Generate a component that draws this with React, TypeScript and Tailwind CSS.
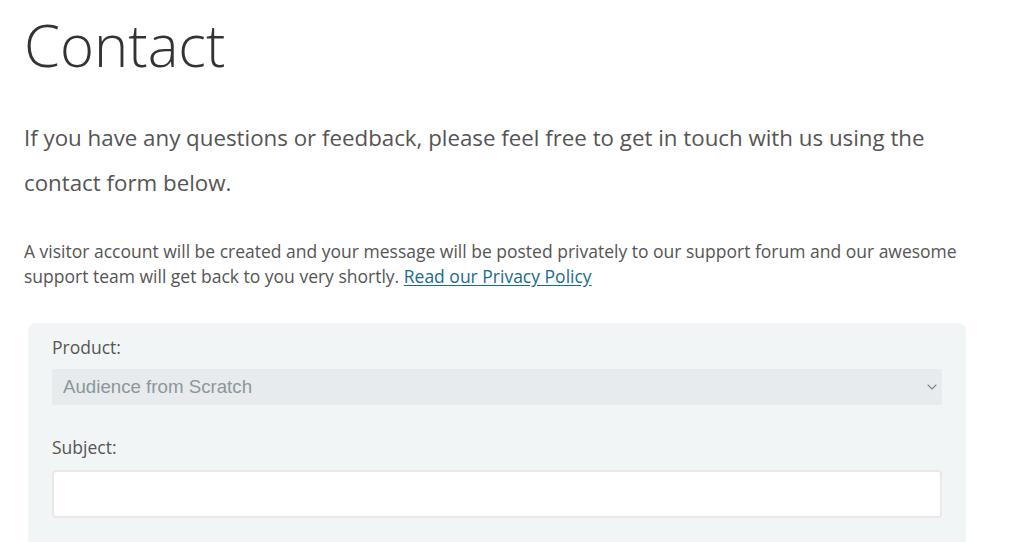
import React from 'react';
import { ChevronDown } from 'lucide-react';

export default function App() {
  return (
    <div className="min-h-screen bg-white font-['Open_Sans',sans-serif] text-[#555]">
      <div className="pl-[24px] pr-[58px]">
        <h1 className="pt-[9px] text-[58px] font-light leading-[72px] text-[#333]">Contact</h1>

        <p className="mt-[34px] text-[22.3px] leading-[45px] text-[#555]">
          If you have any questions or feedback, please feel free to get in touch with us using the contact form below.
        </p>

        <p className="mt-[34px] text-[17.5px] leading-[25px] text-[#555]">
          A visitor account will be created and your message will be posted privately to our support forum and our awesome support team will get back to you very shortly.{' '}
          <a href="#" className="text-[#1b6b8a] underline underline-offset-2">Read our Privacy Policy</a>
        </p>

        <form className="mt-[34px] ml-[4px] w-[938px] rounded-t-[8px] bg-[#f2f5f6] px-[24px] pt-[12px] pb-[24px]">
          <label className="block text-[17.5px] leading-[24px] text-[#555]">Product:</label>
          <div className="relative mt-[10px]">
            <select
              disabled
              className="h-[36px] w-full appearance-none rounded-[2px] bg-[#e7ebed] px-[11px] font-['Liberation_Sans',sans-serif] text-[18.7px] text-[#8c969b]"
            >
              <option>Audience from Scratch</option>
            </select>
            <ChevronDown className="pointer-events-none absolute right-[2px] top-[10px] h-[16px] w-[16px] text-[#7c868b]" strokeWidth={1.6} />
          </div>

          <label className="mt-[30px] block text-[17.5px] leading-[24px] text-[#555]">Subject:</label>
          <input
            type="text"
            className="mt-[11px] h-[48px] w-full rounded-[4px] border-2 border-[#e8e8e8] bg-white px-[10px] text-[16px]"
          />
        </form>
      </div>
    </div>
  );
}
